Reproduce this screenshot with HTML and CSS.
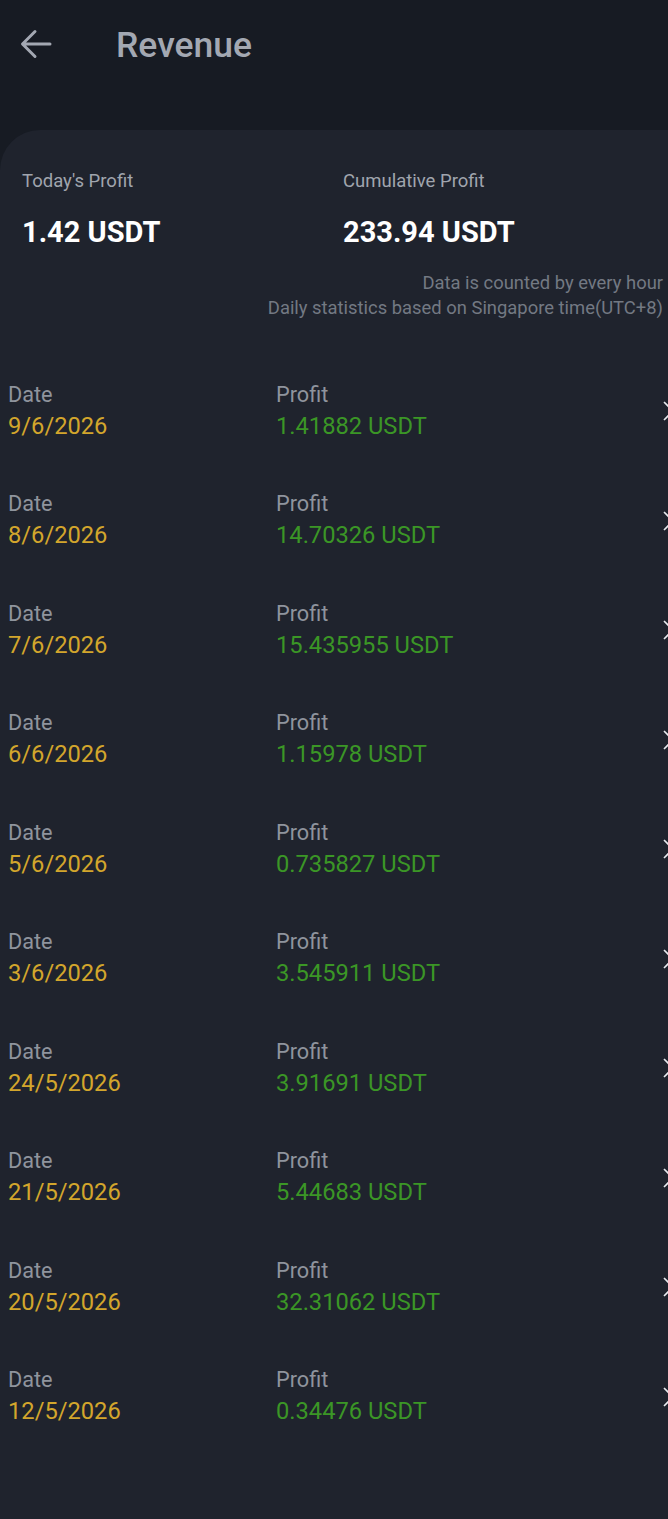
FILE: index.html
```html
<!DOCTYPE html>
<html lang="en">
<head>
<meta charset="UTF-8">
<meta name="viewport" content="width=device-width, initial-scale=1.0">
<title>Revenue</title>

<link rel="stylesheet" href="styles.css">
</head>

<body>

<!-- Top bar -->
<div class="topbar">
<svg class="back" width="32" height="30" viewBox="0 0 32 30">
<path d="M30 15H3M15 2.5L2.5 15L15 27.5" fill="none" stroke="#a3a8b2" stroke-width="3" stroke-linecap="round" stroke-linejoin="round"/>
</svg>
<h1>Revenue</h1>
</div>

<div class="card">

<!-- Summary -->
<div class="summary">
<div class="stat">
<div class="stat-label">Today's Profit</div>
<div class="stat-value">1.42 USDT</div>
</div>
<div class="stat">
<div class="stat-label">Cumulative Profit</div>
<div class="stat-value">233.94 USDT</div>
</div>
</div>

<div class="notes">
<div>Data is counted by every hour</div>
<div>Daily statistics based on Singapore time(UTC+8)</div>
</div>

<!-- Daily list -->
<div class="list" id="list"></div>

</div>

<script>
const rows = [
    ["9/6/2026", "1.41882"],
    ["8/6/2026", "14.70326"],
    ["7/6/2026", "15.435955"],
    ["6/6/2026", "1.15978"],
    ["5/6/2026", "0.735827"],
    ["3/6/2026", "3.545911"],
    ["24/5/2026", "3.91691"],
    ["21/5/2026", "5.44683"],
    ["20/5/2026", "32.31062"],
    ["12/5/2026", "0.34476"]
];

const list = document.getElementById("list");

rows.forEach(r=>{
    list.innerHTML += `
    <div class="row">
    <div class="col date-col">
    <div class="row-label">Date</div>
    <div class="date">${r[0]}</div>
    </div>
    <div class="col">
    <div class="row-label">Profit</div>
    <div class="profit">${r[1]} USDT</div>
    </div>
    <svg class="chev" width="14" height="22" viewBox="0 0 14 22">
    <path d="M2 2L11 11L2 20" fill="none" stroke="#e8eaee" stroke-width="1.6"/>
    </svg>
    </div>
    `;
});
</script>

</body>
</html>
```

FILE: styles.css
```css
body{
    font-family: Roboto, "Noto Sans", Arial, sans-serif;
    margin:0;
    background:#171b23;
    overflow:hidden;
}

.topbar{
    height:130px;
    display:flex;
    align-items:flex-start;
    padding-left:20px;
    box-sizing:border-box;
}

.back{
    margin-top:29px;
}

.topbar h1{
    margin:22px 0 0 64px;
    font-size:35.5px;
    font-weight:500;
    line-height:46px;
    color:#a3a8b2;
}

.card{
    background:#1f232d;
    border-top-left-radius:40px;
    min-height:1389px;
    padding-top:39px;
    box-sizing:border-box;
}

.summary{
    display:grid;
    grid-template-columns:321px 1fr;
    padding-left:22px;
}

.stat-label{
    font-size:18.5px;
    line-height:24px;
    color:#a0a5ae;
}

.stat-value{
    margin-top:21px;
    font-size:29px;
    font-weight:700;
    line-height:36px;
    color:#fff;
}

.notes{
    margin-top:20px;
    padding-right:5px;
    text-align:right;
    font-size:18.4px;
    line-height:25px;
    color:#737983;
}

.list{
    margin-top:60px;
    margin-right:-8px;
}

.row{
    display:flex;
    align-items:center;
    height:109.5px;
    padding:0 0 47.5px 8px;
    box-sizing:border-box;
}

.col{
    flex:1;
}

.date-col{
    flex:0 0 268px;
}

.row-label{
    font-size:21.7px;
    line-height:30px;
    color:#8f949d;
}

.date, .profit{
    font-size:23.7px;
    line-height:33px;
}

.date{
    color:#d3a62c;
}

.profit{
    color:#3b9626;
}
```
